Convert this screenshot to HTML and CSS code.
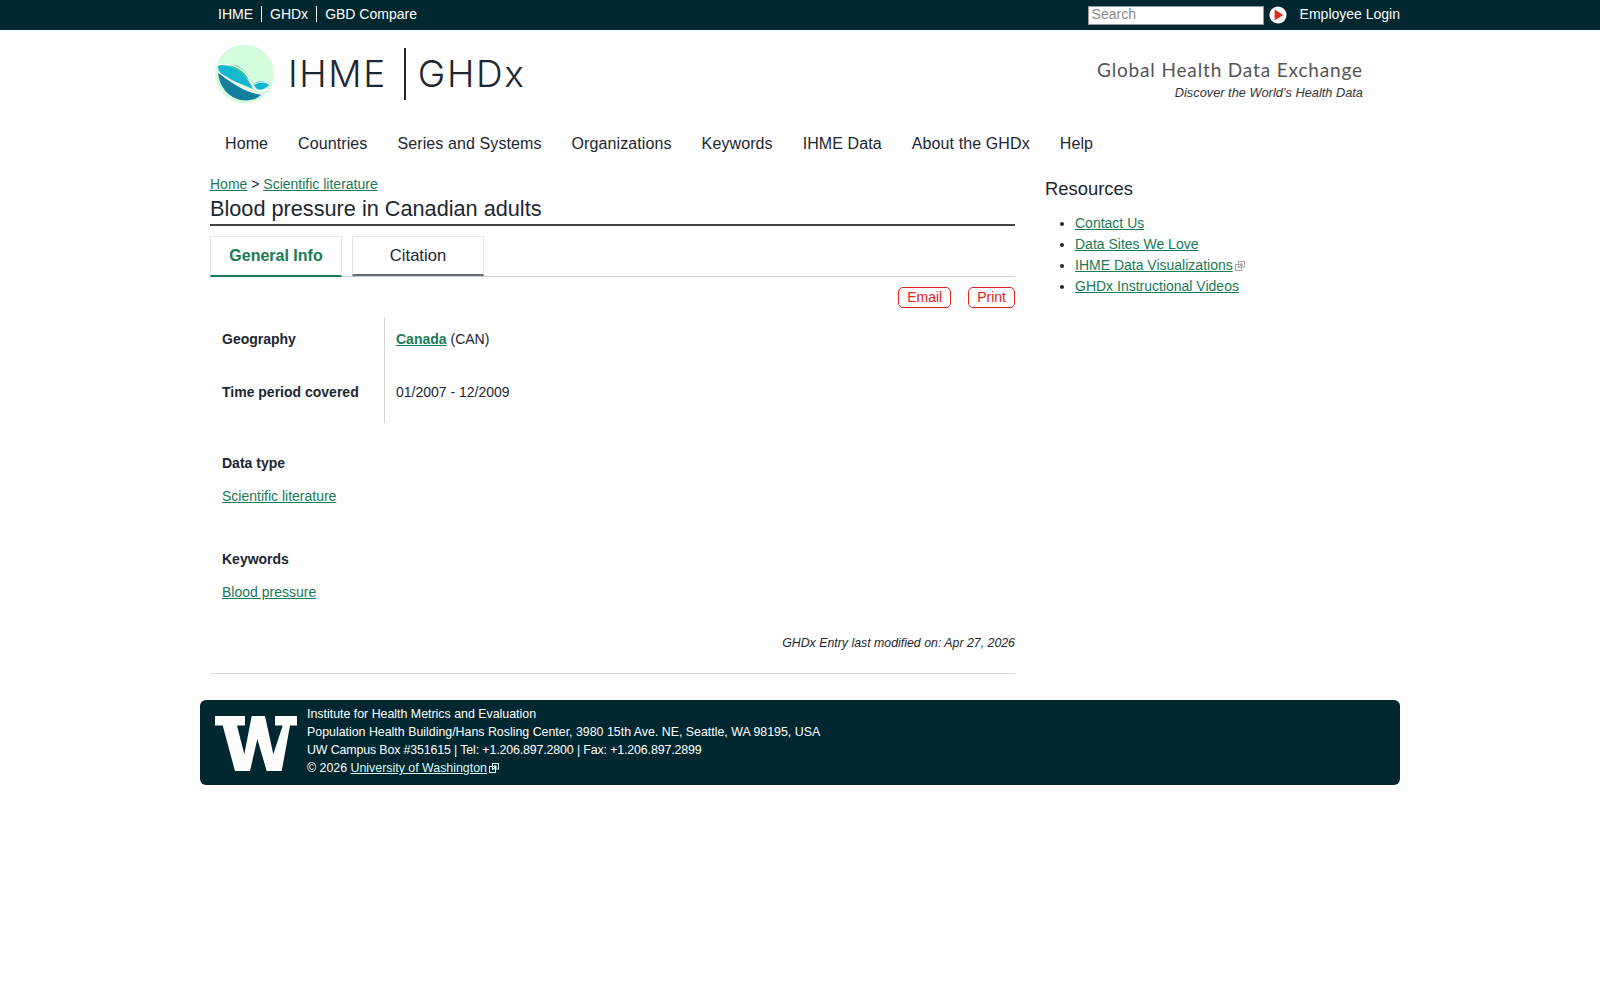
FILE: index.html
```html
<!DOCTYPE html>
<html lang="en">
<head>
<meta charset="utf-8">
<title>Blood pressure in Canadian adults | GHDx</title>
<link rel="stylesheet" href="styles.css">
</head>
<body>
<svg class="defs" width="0" height="0" aria-hidden="true">
  <symbol id="ext" viewBox="0 0 10 10">
    <rect x="3.5" y="0.5" width="6" height="5.5" fill="none" stroke="currentColor" stroke-width="1"/>
    <rect x="0.5" y="3.5" width="6" height="6" fill="none" stroke="currentColor" stroke-width="1"/>
    <path d="M3 7 L7 3 M5 2.8 H7.2 V5" fill="none" stroke="currentColor" stroke-width="0.9"/>
  </symbol>
</svg>
<div class="topbar">
  <div class="wrap topbar-in">
    <ul class="toplinks">
      <li><a href="#">IHME</a></li>
      <li><a href="#">GHDx</a></li>
      <li><a href="#">GBD Compare</a></li>
    </ul>
    <div class="topright">
      <input class="search" type="text" placeholder="Search">
      <svg class="go" viewBox="0 0 18 18" width="18" height="18"><circle cx="9" cy="9" r="8.6" fill="#fff"/><path d="M5.6 3.4 L14.2 9 L5.6 14.6 Z" fill="#e5291c"/></svg>
      <a class="login" href="#">Employee Login</a>
    </div>
  </div>
</div>
<div class="wrap">
  <header class="masthead">
    <div class="brand">
      <svg class="logo" viewBox="0 0 60 60" width="60" height="60">
        <circle cx="29.5" cy="30" r="29.5" fill="#d3fddc"/>
        <path d="M3 28 C4 44 16 56.5 31 56.5 C38 56.5 43 54 47 50 C38 50 31 47 24 43 C17 39 9 34 3 28 Z" fill="#127f9c"/>
        <path d="M3 21.5 C2.5 28 8 32 14 35 C21 38 31 42 38 45 C34 36 28 28 19 24 C13 21.5 7 20.5 3 21.5 Z" fill="#15b6cf"/>
        <path d="M12 20.5 C23 18.5 33 28 39 42 C32 33 24 26 12 20.5 Z" fill="#2ecb8a"/>
        <path d="M37 41 C43 36 50 36 54.5 41 C50 45 45 47 41 45 Z" fill="#15b6cf"/>
        <path d="M3 21 C13 18.5 24 22 31 30 C36 36 37 42 42 46 C45 48 50 47 53 44" fill="none" stroke="#fff" stroke-width="1.3"/>
        <path d="M3 28 C12 34.5 21 39 29 44 C35 47.5 41 50 47 50" fill="none" stroke="#fff" stroke-width="1.3"/>
        <path d="M37 42 C42 37.5 50 36.5 55 41" fill="none" stroke="#fff" stroke-width="1"/>
      </svg>
      <span class="logo-word">IHME</span>
      <span class="logo-rule"></span>
      <span class="logo-word">GHDx</span>
    </div>
    <div class="tagline">
      <div class="tag-main">Global Health Data Exchange</div>
      <div class="tag-sub">Discover the World’s Health Data</div>
    </div>
  </header>
  <nav class="mainnav">
    <a href="#">Home</a>
    <a href="#">Countries</a>
    <a href="#">Series and Systems</a>
    <a href="#">Organizations</a>
    <a href="#">Keywords</a>
    <a href="#">IHME Data</a>
    <a href="#">About the GHDx</a>
    <a href="#">Help</a>
  </nav>
  <div class="columns">
    <main class="content">
      <div class="crumbs"><a href="#">Home</a> &gt; <a href="#">Scientific literature</a></div>
      <h1 class="title">Blood pressure in Canadian adults</h1>
      <div class="tabs">
        <a class="tab active" href="#">General Info</a>
        <a class="tab" href="#">Citation</a>
      </div>
      <div class="actions">
        <a class="pill" href="#">Email</a>
        <a class="pill" href="#">Print</a>
      </div>
      <div class="facts">
        <div class="fact">
          <div class="fact-label">Geography</div>
          <div class="fact-value"><a class="strong-link" href="#">Canada</a> (CAN)</div>
        </div>
        <div class="fact">
          <div class="fact-label">Time period covered</div>
          <div class="fact-value">01/2007 - 12/2009</div>
        </div>
      </div>
      <section class="block block-first">
        <h2 class="block-head">Data type</h2>
        <a href="#">Scientific literature</a>
      </section>
      <section class="block">
        <h2 class="block-head">Keywords</h2>
        <a href="#">Blood pressure</a>
      </section>
      <p class="modified">GHDx Entry last modified on: Apr 27, 2026</p>
    </main>
    <aside class="side">
      <h2 class="side-head">Resources</h2>
      <ul class="side-list">
        <li><a href="#">Contact Us</a></li>
        <li><a href="#">Data Sites We Love</a></li>
        <li><a href="#">IHME Data Visualizations</a><svg class="ext"><use href="#ext"/></svg></li>
        <li><a href="#">GHDx Instructional Videos</a></li>
      </ul>
    </aside>
  </div>
  <footer class="foot">
    <svg class="uw" viewBox="0 0 82 54.3" width="82" height="55" preserveAspectRatio="none">
      <path d="M0 0 H30 V9.3 H22 L29.3 37.7 L36.7 0 H50 L58.3 37.7 L67.7 9.3 H60 V0 H82 V9.3 H75 L66.7 54.3 H51.7 L42.3 22.7 L35 54.3 H20 L7.7 9.3 H0 Z" fill="#fff"/>
    </svg>
    <div class="foot-text">
      <div>Institute for Health Metrics and Evaluation</div>
      <div>Population Health Building/Hans Rosling Center, 3980 15th Ave. NE, Seattle, WA 98195, USA</div>
      <div class="foot-contact">UW Campus Box #351615 | Tel: +1.206.897.2800 | Fax: +1.206.897.2899</div>
      <div>&copy; 2026 <a href="#">University of Washington</a><svg class="ext"><use href="#ext"/></svg></div>
    </div>
  </footer>
</div>
</body>
</html>
```
FILE: styles.css
```css
* { box-sizing: border-box; }
html, body { margin: 0; padding: 0; }
body {
  background: #fefefe;
  color: #1c2731;
  font-family: "Liberation Sans", Arial, sans-serif;
  font-size: 14px;
  line-height: 21px;
}
a { color: #1a7a56; }
.defs { position: absolute; }
.wrap { width: 1200px; margin: 0 auto; }

.topbar { background: #012831; height: 30px; color: #fff; }
.topbar-in { display: flex; justify-content: space-between; align-items: center; height: 30px; }
.toplinks { display: flex; list-style: none; margin: 0 0 2px; padding: 0 0 0 18px; line-height: 16px; }
.toplinks li { padding: 0 8px; border-left: 1px solid #fff; }
.toplinks li:first-child { padding-left: 0; border-left: 0; }
.toplinks a, .login { color: #fff; text-decoration: none; }
.login { margin-bottom: 1px; }
.topright { display: flex; align-items: center; }
.search {
  width: 176px; height: 19px; padding: 0 3px 2px; margin: 0 5px 0 0;
  border: 1px solid #999; background: #fff;
  font: 14px "Liberation Sans", Arial, sans-serif;
}
.search::placeholder { color: #8a8a8a; opacity: 1; }
.go { display: block; margin-right: 13px; }

.masthead { display: flex; justify-content: space-between; height: 90px; padding: 14px 37px 0 15px; }
.brand { display: flex; align-items: center; height: 60px; }
.logo { display: block; margin-right: 13px; }
.logo-word { font-family: Inter, sans-serif; font-weight: 300; font-size: 37px; letter-spacing: 1.6px; line-height: 52px; color: #1c2731; }
.logo-rule { width: 2px; height: 52px; background: #1c2731; margin: 0 12px 0 17px; }
.tagline { text-align: right; padding-top: 14px; }
.tag-main { font-family: Lato, sans-serif; font-size: 19px; line-height: 24px; letter-spacing: .85px; color: #555; }
.tag-sub { font-style: italic; font-size: 12.8px; line-height: 22px; color: #333; }

.mainnav { display: flex; gap: 30px; padding: 0 0 2px 25px; height: 48px; align-items: center; font-size: 16px; letter-spacing: .1px; }
.mainnav a { color: #1c2731; text-decoration: none; }

.columns { display: flex; padding-left: 10px; }
.content { width: 805px; border-bottom: 1px solid #ddd; height: 506px; }
.crumbs { margin-top: 6px; font-size: 14px; line-height: 20px; }
.title { margin: 0; font-weight: 400; font-size: 21.7px; line-height: 30px; border-bottom: 2px solid #444; height: 32px; }
.tabs { display: flex; gap: 10px; margin-top: 10px; height: 41px; border-bottom: 1px solid #ccc; }
.tab {
  width: 132px; height: 40px; display: flex; align-items: center; justify-content: center;
  font-size: 16.6px; color: #1c2731; text-decoration: none;
  border: 1px solid #e6e6ea; border-bottom: 2px solid #5f6b73;
}
.tab.active { height: 41px; padding-bottom: 2px; font-size: 16px; color: #1a7a56; font-weight: 700; border-bottom-color: #1a7a56; }
.actions { display: flex; justify-content: flex-end; gap: 17px; margin-top: 10px; height: 21px; }
.pill {
  height: 21px; padding: 0 8px; border: 1px solid #e2231a; border-radius: 5px;
  color: #e2231a; text-decoration: none; line-height: 19px; font-size: 14px;
}
.facts { margin: 9px 0 0 12px; }
.fact { display: flex; height: 53px; align-items: center; }
.fact-label { width: 163px; height: 100%; padding-bottom: 8px; display: flex; align-items: center; font-weight: 700; border-right: 1px solid #d5d5d5; }
.fact-value { padding: 0 0 8px 11px; }
.strong-link { font-weight: 700; }
.block { margin-left: 12px; }
.block-first { margin-top: 30px; }
.block + .block { margin-top: 42px; }
.block-head { margin: 0 0 12px; font-size: 14px; line-height: 21px; font-weight: 700; }
.modified { margin: 30px 0 0; text-align: right; font-style: italic; font-size: 12.35px; line-height: 20px; }

.side { width: 345px; margin-left: 30px; }
.side-head { margin: 8px 0 0; font-size: 18.4px; line-height: 26px; font-weight: 400; }
.side-list { margin: 11px 0 0; padding-left: 30px; }
.ext { width: 10px; height: 10px; margin-left: 2px; color: #a8a8a8; vertical-align: -1px; }

.foot {
  display: flex; gap: 10px; margin-top: 26px; height: 85px; padding: 16px 15px 0;
  background: #012831; border-radius: 6px; color: #fff;
}
.uw { display: block; flex: none; }
.foot-text { margin-top: -11px; font-size: 12.38px; line-height: 18px; }
.foot-contact { letter-spacing: -.13px; }
.foot-text a { color: #d8fbf4; }
.foot-text .ext { color: #d8fbf4; }
```
